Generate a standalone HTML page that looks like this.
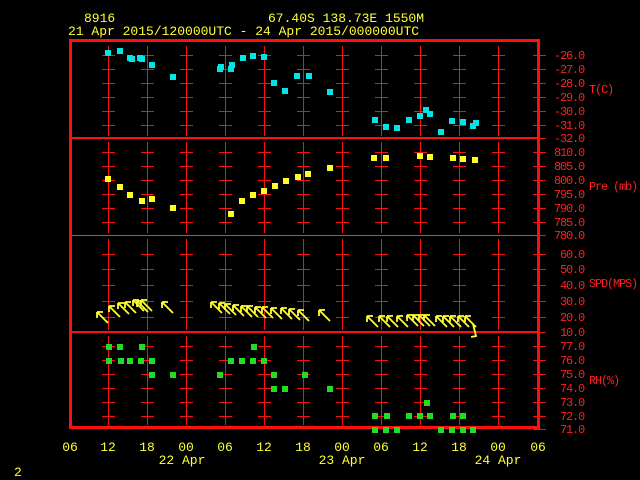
<!DOCTYPE html>
<html><head><meta charset="utf-8"><style>
html,body{margin:0;padding:0;background:#000;width:640px;height:480px;overflow:hidden}
svg{display:block}
text{font-family:"Liberation Mono",monospace;font-size:13px}
.sm text{font-size:12px;letter-spacing:-1.2px}
.y{fill:#ffff33}.r{fill:#ff2020}
</style></head><body>
<svg id="s" width="640" height="480" viewBox="0 0 640 480">
<rect width="640" height="480" fill="#000"/>
<g id="grid" fill="#ff1010"></g>
<rect x="70" y="235" width="469" height="1" fill="#707070"/>
<rect x="70" y="137" width="469" height="2" fill="#ff1010"/>
<rect x="70" y="331" width="469" height="2" fill="#ff1010"/>
<rect x="70.5" y="40.5" width="468" height="387" fill="none" stroke="#ff1010" stroke-width="3"/>
<g id="pts"></g>
<g id="wind" stroke="#ffff33" stroke-width="1.8" fill="none"></g>
<text class="y" x="84" y="22">8916</text>
<text class="y" x="268" y="22">67.40S  138.73E  1550M</text>
<text class="y" x="68" y="35">21 Apr 2015/120000UTC - 24 Apr 2015/000000UTC</text>
<g class="r sm" text-anchor="end">
<text x="584" y="59">-26.0</text><text x="584" y="73">-27.0</text><text x="584" y="87">-28.0</text><text x="584" y="101">-29.0</text><text x="584" y="115">-30.0</text><text x="584" y="129">-31.0</text><text x="584" y="142">-32.0</text>
<text x="584" y="156">810.0</text><text x="584" y="170">805.0</text><text x="584" y="184">800.0</text><text x="584" y="198">795.0</text><text x="584" y="212">790.0</text><text x="584" y="226">785.0</text><text x="584" y="239">780.0</text>
<text x="584" y="258">60.0</text><text x="584" y="273">50.0</text><text x="584" y="289">40.0</text><text x="584" y="305">30.0</text><text x="584" y="321">20.0</text><text x="584" y="336">10.0</text>
<text x="584" y="350">77.0</text><text x="584" y="364">76.0</text><text x="584" y="378">75.0</text><text x="584" y="392">74.0</text><text x="584" y="406">73.0</text><text x="584" y="420">72.0</text><text x="584" y="433">71.0</text>
</g>
<g class="r sm">
<text x="589" y="93">T(C)</text><text x="589" y="190">Pre (mb)</text><text x="589" y="287">SPD(MPS)</text><text x="589" y="384">RH(%)</text>
</g>
<g class="y" text-anchor="middle">
<text x="70" y="451">06</text><text x="108" y="451">12</text><text x="147" y="451">18</text><text x="186" y="451">00</text><text x="225" y="451">06</text><text x="264" y="451">12</text><text x="303" y="451">18</text><text x="342" y="451">00</text><text x="381" y="451">06</text><text x="420" y="451">12</text><text x="459" y="451">18</text><text x="498" y="451">00</text><text x="538" y="451">06</text>
<text x="182" y="464">22 Apr</text><text x="342" y="464">23 Apr</text><text x="498" y="464">24 Apr</text>
</g>
<text class="y" x="14" y="476">2</text>
</svg>
<script>
var NS="http://www.w3.org/2000/svg";
function el(p,t,a){var e=document.createElementNS(NS,t);for(var k in a)e.setAttribute(k,a[k]);p.appendChild(e);return e;}
var g=document.getElementById("grid");
function R(x,y,w,h){el(g,"rect",{x:x,y:y,width:w,height:h});}
var cols=[108,147,186,225,264,303,342,381,420,459,498];
var panels=[[46,[55,69,83,97,111,125],136],[142,[152,166,180,194,208,222],233],[239,[254,269,285,301,317],330],[336,[346,360,374,388,402,416],425]];
cols.forEach(function(x){
 panels.forEach(function(p){
  p[1].forEach(function(y){R(x-6,y,13,1);});
  R(x,p[0],1,p[2]-p[0]);
 });
});
[55,69,83,97,111,125,138,152,166,180,194,208,222,235,254,269,285,301,317,332,346,360,374,388,402,416,429].forEach(function(y){R(533,y,13,1);});
var pts=document.getElementById("pts");
function sq(arr,c){arr.forEach(function(p){el(pts,"rect",{x:p[0]-3,y:p[1]-3,width:6,height:6,fill:c});});}
sq([[108,53],[120,51],[130,58],[132,59],[140,58],[142,59],[152,65],[173,77],[220,69],[221,67],[231,69],[232,65],[243,58],[253,56],[264,57],[274,83],[285,91],[297,76],[309,76],[330,92],[375,120],[386,127],[397,128],[409,120],[420,116],[426,110],[430,114],[441,132],[452,121],[463,122],[473,126],[476,123]],"#00e5e5");
sq([[108,179],[120,187],[130,195],[142,201],[152,199],[173,208],[231,214],[242,201],[253,195],[264,191],[275,186],[286,181],[298,177],[308,174],[330,168],[374,158],[386,158],[420,156],[430,157],[453,158],[463,159],[475,160]],"#ffff22");
sq([[109,347],[120,347],[142,347],[109,361],[121,361],[130,361],[141,361],[152,361],[152,375],[173,375],[220,375],[231,361],[242,361],[253,361],[264,361],[254,347],[274,375],[305,375],[274,389],[285,389],[330,389],[375,416],[387,416],[409,416],[420,416],[430,416],[453,416],[463,416],[427,403],[375,430],[386,430],[397,430],[441,430],[452,430],[463,430],[473,430]],"#22dd22");
var w=document.getElementById("wind"),wd="";
[[108,323],[120,317],[129,314],[136,313],[144,311],[148,312],[152,311],[173,313],[222,313],[230,314],[236,315],[244,316],[252,317],[258,317],[266,318],[273,318],[282,319],[292,319],[300,320],[309,321],[330,321],[378,327],[390,327],[398,327],[408,327],[418,326],[424,326],[430,326],[435,326],[447,327],[454,327],[461,327],[469,327],[476,327]].forEach(function(p){
 var x=p[0],y=p[1],x2=x-11,y2=y-11;wd+="M"+x+" "+y+"L"+x2+" "+y2+"M"+x2+" "+y2+"h6M"+x2+" "+y2+"v6";});
wd+="M473 324L476 336L471 337";
el(w,"path",{d:wd});
</script>
</body></html>
